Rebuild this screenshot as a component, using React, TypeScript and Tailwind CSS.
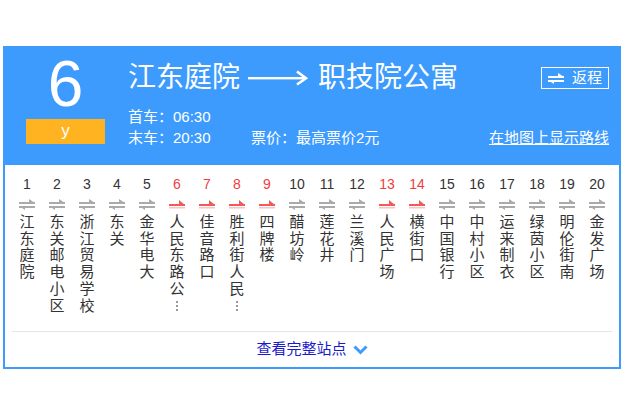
import React from "react";

const stops = [
  { n: 1, name: "江东庭院" },
  { n: 2, name: "东关邮电小区" },
  { n: 3, name: "浙江贸易学校" },
  { n: 4, name: "东关" },
  { n: 5, name: "金华电大" },
  { n: 6, name: "人民东路公", more: true, hot: true },
  { n: 7, name: "佳音路口", hot: true },
  { n: 8, name: "胜利街人民", more: true, hot: true },
  { n: 9, name: "四牌楼", hot: true },
  { n: 10, name: "醋坊岭" },
  { n: 11, name: "莲花井" },
  { n: 12, name: "兰溪门" },
  { n: 13, name: "人民广场", hot: true },
  { n: 14, name: "横街口", hot: true },
  { n: 15, name: "中国银行" },
  { n: 16, name: "中村小区" },
  { n: 17, name: "运来制衣" },
  { n: 18, name: "绿茵小区" },
  { n: 19, name: "明伦街南" },
  { n: 20, name: "金发广场" },
];

const SwapIcon = ({ color }: { color: string }) => (
  <svg width="16" height="11" viewBox="0 0 16 11">
    <rect x="0" y="3" width="16" height="2" fill={color} />
    <polygon points="10,0 16,4 10,4" fill={color} />
    <rect x="0" y="7" width="16" height="2" fill={color} />
    <polygon points="0,7 6,7 6,11" fill={color} />
  </svg>
);

const RedArrow = () => (
  <svg width="16" height="11" viewBox="0 0 16 11">
    <rect x="0" y="5" width="16" height="2" fill="#f25a5a" />
    <polygon points="10,1 16,6 10,6" fill="#f25a5a" />
    <rect x="0" y="8" width="16" height="1.5" fill="#fbc4c4" />
  </svg>
);

const App = () => {
  return (
    <div className="font-['Liberation_Sans','Noto_Sans_CJK_SC',sans-serif] bg-white w-[627px] h-[418px] pt-[46px] pl-[3px]">
      <div className="w-[618px] border-2 border-[#3d9bfd]">
        {/* header */}
        <div className="bg-[#3d9bfd] text-white flex h-[117px]">
          <div className="ml-[21px] w-[79px] flex flex-col items-center">
            <div className="text-[64px] leading-[64px] h-[64px] mt-[4px]">6</div>
            <div className="mt-[3px] w-[79px] h-[25px] bg-[#ffb321] text-[17px] leading-[23px] text-center">y</div>
          </div>
          <div className="flex-1 ml-[23px] mr-[10px]">
            <div className="flex items-start justify-between pt-[12px]">
              <div className="flex items-center text-[28px] leading-[36px]">
                <span>江东庭院</span>
                <svg width="62" height="16" viewBox="0 0 62 16" className="mx-[8px]">
                  <rect x="0" y="7" width="56" height="2.4" fill="white" />
                  <polyline points="49,1.5 58,8.2 49,14.5" fill="none" stroke="white" strokeWidth="2.6" />
                </svg>
                <span>职技院公寓</span>
              </div>
              <div className="mt-[7px] flex items-center gap-[8px] border border-white h-[22px] px-[6px] text-[15px] leading-[20px]">
                <SwapIcon color="#ffffff" />
                <span>返程</span>
              </div>
            </div>
            <div className="mt-[10px] text-[15px] leading-[21px]">首车：06:30</div>
            <div className="flex text-[15px] leading-[21px]">
              <span className="w-[123px]">末车：20:30</span>
              <span>票价：最高票价2元</span>
              <span className="ml-auto underline">在地图上显示路线</span>
            </div>
          </div>
        </div>
        {/* stops */}
        <div className="flex pl-[7px] pt-[9px] h-[166px]">
          {stops.map((s) => (
            <div key={s.n} className="w-[30px] flex flex-col items-center">
              <div className={`text-[14px] leading-[20px] ${s.hot ? "text-[#f23d3d]" : "text-[#333333]"}`}>{s.n}</div>
              <div className="h-[20px] flex items-center">
                {s.hot ? <RedArrow /> : <SwapIcon color="#aaaaaa" />}
              </div>
              <div className="flex flex-col items-center text-[15px] leading-[16.7px] text-[#333333]">
                {s.name.split("").map((c, i) => (
                  <span key={i}>{c}</span>
                ))}
                {s.more && (
                  <div className="flex flex-col gap-[2px] mt-[3px]">
                    <span className="w-[2px] h-[2px] bg-[#999999]" />
                    <span className="w-[2px] h-[2px] bg-[#999999]" />
                    <span className="w-[2px] h-[2px] bg-[#999999]" />
                  </div>
                )}
              </div>
            </div>
          ))}
        </div>
        <div className="mx-[7px] h-px bg-[#e6e6e6]" />
        <div className="h-[35px] flex items-center justify-center gap-[6px] text-[15px] text-[#1a1acc]">
          <span>查看完整站点</span>
          <svg width="15" height="10" viewBox="0 0 15 10">
            <polyline points="1.5,1.5 7.5,7.5 13.5,1.5" fill="none" stroke="#3d9bfd" strokeWidth="3" />
          </svg>
        </div>
      </div>
    </div>
  );
};

export default App;
